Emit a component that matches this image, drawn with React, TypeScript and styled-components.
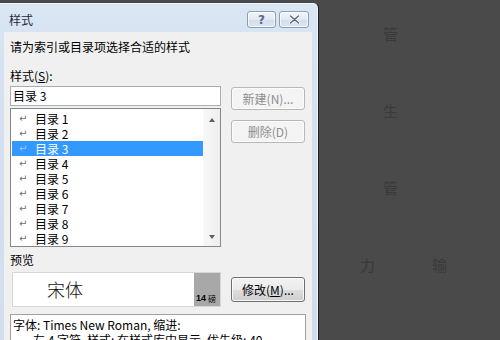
import React from 'react';
import styled, { createGlobalStyle } from 'styled-components';

const GlobalStyle = createGlobalStyle`
  html, body {
    margin: 0;
    padding: 0;
    width: 500px;
    height: 340px;
    overflow: hidden;
    background: #4a4a4a;
  }
  * {
    box-sizing: border-box;
  }
`;

const FONT = `"Noto Sans CJK SC", "Noto Sans", sans-serif`;

const Screen = styled.div`
  display: flex;
  width: 500px;
  height: 340px;
  overflow: hidden;
  font-family: ${FONT};
`;

const Dialog = styled.div`
  width: 319px;
  height: 360px;
  margin-top: 2px;
  display: flex;
  flex-direction: column;
  background: linear-gradient(to bottom, #dbe6f3 0px, #d5e2f1 60px, #cfdded 100%);
  border-top: 1px solid #3f4650;
  border-right: 1px solid #1c1f24;
  border-top-right-radius: 6px;
  box-shadow: inset 0 1px 0 #f4f8fc, inset -1px 0 0 #eef4fa;
`;

const TitleBar = styled.div`
  height: 29px;
  display: flex;
  align-items: flex-start;
  padding: 8px 9px 0 9px;
`;

const Title = styled.div`
  flex: 1;
  font-size: 12px;
  line-height: 17px;
  color: #1e2a3a;
`;

const CaptionButton = styled.div<{ $w: number }>`
  width: ${p => p.$w}px;
  height: 17px;
  margin-left: 3px;
  display: flex;
  align-items: center;
  justify-content: center;
  border: 1px solid #8c9db4;
  border-radius: 3px;
  background: linear-gradient(to bottom, #f1f5fa 0%, #e1e9f3 50%, #d3dfed 51%, #dae5f2 100%);
  box-shadow: inset 0 0 0 1px rgba(255, 255, 255, 0.7);
  font-family: "DejaVu Sans", sans-serif;
  font-size: 12px;
  font-weight: bold;
  color: #5a6b82;
  line-height: 1;
`;

const Client = styled.div`
  flex: 1;
  margin: 0 6px 0 4px;
  padding: 0 6px;
  background: #f0f0f0;
  display: flex;
  flex-direction: column;
  font-size: 12px;
  color: #000;
`;

const Text = styled.div<{ $top: number }>`
  margin-top: ${p => p.$top}px;
  line-height: 13px;
  font-size: 12px;
  white-space: nowrap;
`;

const Underline = styled.span`
  text-decoration: underline;
`;

const MainRow = styled.div`
  display: flex;
  margin-top: 4px;
`;

const LeftColumn = styled.div`
  width: 211px;
  display: flex;
  flex-direction: column;
`;

const RightColumn = styled.div`
  width: 74px;
  margin-left: 10px;
  padding-top: 1px;
  display: flex;
  flex-direction: column;
  gap: 10px;
`;

const NameInput = styled.div`
  height: 20px;
  border: 1px solid #abadb3;
  border-top-color: #a5acb5;
  background: #fff;
  padding-left: 2px;
  font-size: 12px;
  line-height: 18px;
`;

const ListBox = styled.div`
  height: 139px;
  margin-top: 2px;
  border: 1px solid #828790;
  background: #fff;
  display: flex;
`;

const Items = styled.div`
  flex: 1;
  padding: 2px 0 0 1px;
  display: flex;
  flex-direction: column;
`;

const Item = styled.div<{ $selected?: boolean }>`
  height: 15px;
  display: flex;
  align-items: center;
  font-size: 12px;
  line-height: 15px;
  background: ${p => (p.$selected ? '#3399ff' : 'transparent')};
  color: ${p => (p.$selected ? '#fff' : '#000')};
`;

const ReturnMark = styled.span<{ $selected?: boolean }>`
  width: 23px;
  padding-left: 7px;
  font-family: "DejaVu Sans", sans-serif;
  font-size: 10px;
  color: ${p => (p.$selected ? '#9cc8f5' : '#707070')};
`;

const ScrollBar = styled.div`
  width: 17px;
  display: flex;
  flex-direction: column;
  justify-content: space-between;
  align-items: center;
  padding: 9px 0 7px 0;
  background: linear-gradient(to right, #f7f7f7, #eeeeee);
  border-left: 1px solid #f9f9f9;
`;

const Arrow = styled.div<{ $down?: boolean }>`
  width: 0;
  height: 0;
  border-left: 3.5px solid transparent;
  border-right: 3.5px solid transparent;
  ${p => (p.$down ? 'border-top: 4px solid #606060;' : 'border-bottom: 4px solid #606060;')}
`;

const Button = styled.div<{ $disabled?: boolean; $h?: number }>`
  height: ${p => p.$h || 23}px;
  display: flex;
  align-items: center;
  justify-content: center;
  border: 1px solid ${p => (p.$disabled ? '#b5b8bb' : '#707070')};
  border-radius: 3px;
  font-size: 12px;
  color: ${p => (p.$disabled ? '#8d8d8d' : '#000')};
  background: ${p =>
    p.$disabled
      ? '#f4f4f4'
      : 'linear-gradient(to bottom, #f2f2f2 0%, #ebebeb 50%, #dddddd 51%, #cfcfcf 100%)'};
  box-shadow: inset 0 0 0 1px ${p => (p.$disabled ? '#fbfbfb' : 'rgba(255,255,255,0.8)')};
  white-space: nowrap;
`;

const PreviewRow = styled.div`
  display: flex;
  margin-top: 6px;
`;

const PreviewBox = styled.div`
  width: 209px;
  height: 35px;
  margin-left: 2px;
  display: flex;
  border: 1px solid #d6d6d6;
  background: #fff;
`;

const PreviewSample = styled.div`
  flex: 1;
  padding-left: 34px;
  font-size: 18px;
  line-height: 33px;
  font-weight: 300;
  color: #111;
`;

const SizeTag = styled.div`
  width: 26px;
  background: #a8a8a8;
  display: flex;
  align-items: flex-end;
  padding: 0 0 3px 2px;
  font-size: 8px;
  line-height: 9px;
  color: #000;
  white-space: nowrap;
`;

const SizeNum = styled.span`
  font-family: "Liberation Sans", sans-serif;
  font-weight: bold;
  font-size: 9px;
  margin-right: 2px;
`;

const ModifyWrap = styled.div`
  width: 74px;
  margin-left: 10px;
  padding-top: 5px;
`;

const Description = styled.div`
  width: 296px;
  height: 40px;
  margin-top: 7px;
  border: 1px solid #a0a0a0;
  background: #fff;
  padding: 2px 2px 0 22px;
  text-indent: -20px;
  font-size: 12px;
  line-height: 15px;
`;

const Document = styled.div`
  flex: 1;
  display: flex;
  flex-direction: column;
  gap: 61px;
  padding: 26px 0 0 64px;
  font-size: 15px;
  line-height: 16px;
  color: #393939;
`;

const DocRow = styled.div`
  display: flex;
  gap: 57px;
  margin-left: -23px;
`;

const entries = [1, 2, 3, 4, 5, 6, 7, 8, 9];

export default function App() {
  return (
    <>
      <GlobalStyle />
      <Screen>
        <Dialog>
          <TitleBar>
            <Title>样式</Title>
            <CaptionButton $w={29}>?</CaptionButton>
            <CaptionButton $w={30}>
              <svg width="11" height="9" viewBox="0 0 11 9">
                <path d="M1.5 1 L9.5 8 M9.5 1 L1.5 8" stroke="#ffffff" strokeWidth="3.4" strokeLinecap="round" />
                <path d="M1.5 1 L9.5 8 M9.5 1 L1.5 8" stroke="#5a6b82" strokeWidth="1.6" strokeLinecap="round" />
              </svg>
            </CaptionButton>
          </TitleBar>
          <Client>
            <Text $top={8}>请为索引或目录项选择合适的样式</Text>
            <Text $top={16}>
              样式(<Underline>S</Underline>):
            </Text>
            <MainRow>
              <LeftColumn>
                <NameInput>目录 3</NameInput>
                <ListBox>
                  <Items>
                    {entries.map(n => (
                      <Item key={n} $selected={n === 3}>
                        <ReturnMark $selected={n === 3}>↵</ReturnMark>
                        目录 {n}
                      </Item>
                    ))}
                  </Items>
                  <ScrollBar>
                    <Arrow />
                    <Arrow $down />
                  </ScrollBar>
                </ListBox>
              </LeftColumn>
              <RightColumn>
                <Button $disabled>新建(N)...</Button>
                <Button $disabled>删除(D)</Button>
              </RightColumn>
            </MainRow>
            <Text $top={6}>预览</Text>
            <PreviewRow>
              <PreviewBox>
                <PreviewSample>宋体</PreviewSample>
                <SizeTag>
                  <SizeNum>14</SizeNum>磅
                </SizeTag>
              </PreviewBox>
              <ModifyWrap>
                <Button $h={25}>
                  修改(<Underline>M</Underline>)...
                </Button>
              </ModifyWrap>
            </PreviewRow>
            <Description>
              字体: Times New Roman, 缩进:
              <br />
              左 4 字符, 样式: 在样式库中显示, 优先级: 40
            </Description>
          </Client>
        </Dialog>
        <Document>
          <div>管</div>
          <div>生</div>
          <div>管</div>
          <DocRow>
            <span>力</span>
            <span>输</span>
          </DocRow>
        </Document>
      </Screen>
    </>
  );
}
